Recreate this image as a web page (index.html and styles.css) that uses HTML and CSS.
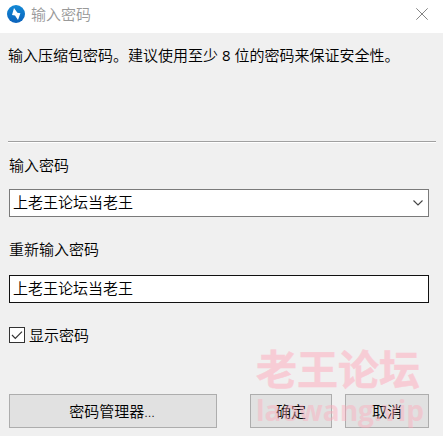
FILE: index.html
```html
<!DOCTYPE html>
<html lang="zh-CN">
<head>
  <meta charset="utf-8">
  <title>输入密码</title>
  <link rel="stylesheet" href="styles.css">
</head>
<body>
  <div class="dialog">
    <header class="titlebar">
      <svg class="logo" viewBox="0 0 18 18" width="18" height="18">
        <defs>
          <linearGradient id="blue" x1="0" y1="0" x2="0" y2="1">
            <stop offset="0" stop-color="#1289d6"/>
            <stop offset="1" stop-color="#0c62bb"/>
          </linearGradient>
        </defs>
        <circle cx="9" cy="9" r="9" fill="url(#blue)"/>
        <path d="M7 3 L10.4 7.8 L13.4 8.2 L11 15 L8 10.4 L5 10 Z" fill="#fff"/>
      </svg>
      <span class="title">输入密码</span>
      <svg class="close" viewBox="0 0 12 12" width="12" height="12">
        <path d="M0.3 0.3 L11.7 11.7 M11.7 0.3 L0.3 11.7" stroke="#858585" fill="none"/>
      </svg>
    </header>

    <p class="message">输入压缩包密码。建议使用至少 <span class="count">8</span> 位的密码来保证安全性。</p>

    <form class="form">
      <div class="label">输入密码</div>
      <div class="field combo">
        <span>上老王论坛当老王</span>
        <svg viewBox="0 0 10 6" width="10" height="6">
          <path d="M0.5 0.5 L5 5 L9.5 0.5" stroke="#444" stroke-width="1.1" fill="none"/>
        </svg>
      </div>
      <div class="label label-repeat">重新输入密码</div>
      <div class="field active"><span>上老王论坛当老王</span></div>
      <div class="check">
        <span class="box">
          <svg viewBox="0 0 14 14" width="14" height="14">
            <path d="M2 7 L5.3 10.3 L12 3.6" stroke="#333" stroke-width="1.2" fill="none"/>
          </svg>
        </span>
        <span>显示密码</span>
      </div>
    </form>

    <footer class="buttons">
      <button class="btn manager" type="button">密码管理器...</button>
      <button class="btn ok" type="button">确定</button>
      <button class="btn cancel" type="button">取消</button>
    </footer>

    <div class="watermark">
      <div class="wm-name">老王论坛</div>
      <div class="wm-site">laowang.vip</div>
    </div>
  </div>
</body>
</html>
```

FILE: styles.css
```css
* {
  box-sizing: border-box;
}
body {
  margin: 0;
  background: #f0f0f0;
  color: #000;
  font-family: "Open Sans", "Noto Sans CJK SC", sans-serif;
  font-size: 15px;
  font-weight: 350;
  line-height: 20px;
}
.dialog {
  position: relative;
  width: 443px;
  height: 436px;
  overflow: hidden;
}
.titlebar {
  display: flex;
  align-items: center;
  height: 33px;
  padding: 0 15px 5px 7px;
  background: #fff;
}
.title {
  margin-left: 6px;
  color: #999;
}
.close {
  margin-left: auto;
}
.message {
  height: 109px;
  margin: 0 7px 0 8px;
  padding-top: 12px;
  border-bottom: 1px solid #a0a0a0;
  box-shadow: 0 1px 0 #fff;
  white-space: nowrap;
}
.count {
  font-weight: 400;
}
.form {
  height: 252px;
  padding: 13px 14px 0 9px;
}
.label {
  margin-bottom: 14px;
}
.label-repeat {
  margin-top: 22px;
  margin-bottom: 16px;
}
.field {
  display: flex;
  align-items: center;
  justify-content: space-between;
  height: 28px;
  padding: 0 5px 2px 3px;
  background: #fff;
  border: 1px solid #7a7a7a;
}
.field svg {
  margin-top: 2px;
}
.field.active {
  border-color: #111;
}
.check {
  display: flex;
  align-items: center;
  gap: 4px;
  margin-top: 22px;
}
.box {
  display: flex;
  width: 16px;
  height: 16px;
  background: #fff;
  border: 1px solid #333;
}
.buttons {
  display: flex;
  padding: 0 14px 0 9px;
}
.btn {
  height: 34px;
  padding: 0;
  background: #e1e1e1;
  border: 1px solid #adadad;
  color: #000;
  font: inherit;
}
.manager {
  width: 208px;
  padding-right: 2px;
}
.ok {
  width: 82px;
  margin-left: 33px;
}
.cancel {
  width: 84px;
  margin-left: 13px;
}

/* translucent stamp over the buttons */
.watermark {
  position: absolute;
  top: 348px;
  left: 256px;
  color: #ffaabb;
  font-weight: 700;
  opacity: 0.5;
  white-space: nowrap;
  pointer-events: none;
}
.wm-name {
  font-size: 41px;
  line-height: 42px;
  -webkit-text-stroke: 0.5px #ffaabb;
}
.wm-site {
  font-size: 28px;
  line-height: 40px;
  opacity: 0.85;
}
```
